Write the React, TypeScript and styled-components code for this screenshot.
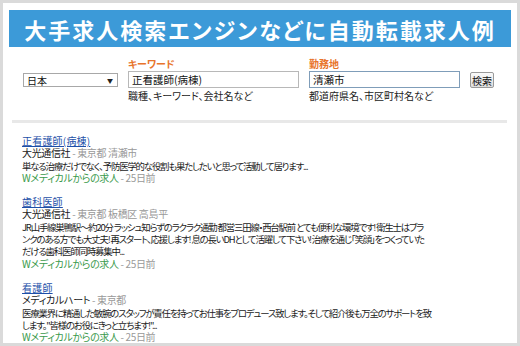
import React from "react";
import styled, { createGlobalStyle } from "styled-components";

const GlobalStyle = createGlobalStyle`
  html, body {
    margin: 0;
    padding: 0;
    background: #ffffff;
  }
  body {
    font-family: "Noto Sans CJK JP", "Noto Sans", sans-serif;
    font-feature-settings: "palt";
  }
`;

const Frame = styled.div`
  width: 520px;
  height: 346px;
  box-sizing: border-box;
  border: 3px solid #dadada;
  background: #ffffff;
  overflow: hidden;
`;

const Banner = styled.h1`
  margin: 7px 6px 0;
  height: 37px;
  background: #3c9ad8;
  color: #ffffff;
  font-size: 22px;
  font-weight: 700;
  letter-spacing: 2px;
  display: flex;
  align-items: center;
  justify-content: center;
`;

const SearchRow = styled.form`
  display: flex;
  align-items: flex-start;
  gap: 10px;
  padding: 11px 0 0 20px;
  height: 73px;
  box-sizing: border-box;
`;

const Field = styled.div<{ $width: number; $offset?: number }>`
  display: flex;
  flex-direction: column;
  width: ${({ $width }) => $width}px;
  padding-top: ${({ $offset }) => $offset ?? 0}px;
`;

const Label = styled.label`
  height: 13px;
  line-height: 12px;
  font-size: 10px;
  font-weight: 700;
  color: #e8742a;
`;

const SelectBox = styled.div`
  height: 14px;
  box-sizing: border-box;
  border: 1px solid #a8a8a8;
  display: flex;
  align-items: center;
  justify-content: space-between;
  padding: 0 4px 0 3px;
  font-size: 10px;
  color: #111;
`;

const Arrow = styled.span`
  font-size: 6px;
  color: #222;
`;

const TextInput = styled.input<{ $focus?: boolean }>`
  height: 17px;
  box-sizing: border-box;
  border: 1px solid ${({ $focus }) => ($focus ? "#7f9db9" : "#b8b8b8")};
  padding: 0 3px;
  margin: 0;
  font-family: inherit;
  font-feature-settings: "palt";
  font-size: 10.5px;
  color: #111;
  outline: none;
`;

const Hint = styled.div`
  margin-top: 2px;
  font-size: 10px;
  line-height: 11px;
  color: #222;
`;

const SearchButton = styled.button`
  margin-top: 14px;
  width: 24px;
  height: 16px;
  padding: 0;
  border: 1px solid #9a9a9a;
  border-radius: 2px;
  background: linear-gradient(#fafafa, #dedede);
  font-family: inherit;
  font-size: 10px;
  color: #111;
`;

const Divider = styled.hr`
  margin: 0 10px 0 9px;
  border: none;
  height: 3px;
  background: #e8e8e8;
`;

const Results = styled.div`
  padding: 12px 0 0 19px;
`;

const Job = styled.div`
  margin-bottom: 12px;
  font-size: 10px;
  line-height: 12.3px;
  color: #1a1a1a;
  white-space: nowrap;
`;

const JobTitle = styled.a`
  display: inline-block;
  color: #1d4fa8;
  text-decoration: underline;
  letter-spacing: 0.2px;
`;

const Line = styled.div<{ $tight?: boolean }>`
  font-size: ${({ $tight }) => ($tight ? "9.4px" : "10px")};
  letter-spacing: ${({ $tight }) => ($tight ? "-1.15px" : "-0.35px")};
`;

const Muted = styled.span`
  color: #999;
`;

const Source = styled.span`
  color: #3a9a4c;
`;

type JobData = {
  title: string;
  company: string;
  place: string;
  lines: string[];
};

const jobs: JobData[] = [
  {
    title: "正看護師(病棟)",
    company: "大光通信社",
    place: "東京都 清瀬市",
    lines: ["単なる治療だけでなく、予防医学的な役割も果たしたいと思って活動して居ります..."],
  },
  {
    title: "歯科医師",
    company: "大光通信社",
    place: "東京都 板橋区 高島平",
    lines: [
      "JR山手線巣鴨駅～約20分 ラッシュ知らずのラクラク通勤 都営三田線・西台駅前 とても便利な環境です! 衛生士はブラ",
      "ンクのある方でも大丈夫! 再スタート、応援します! 息の長いDHとして活躍して下さい! 治療を通じ「笑顔」をつくっていた",
      "だける歯科医師同時募集中...",
    ],
  },
  {
    title: "看護師",
    company: "メディカルハート",
    place: "東京都",
    lines: [
      "医療業界に精通した敏腕のスタッフが責任を持ってお仕事をプロデュース致します。そして紹介後も万全のサポートを致",
      "します。\"皆様のお役にきっと立ちます!\"...",
    ],
  },
];

const App: React.FC = () => {
  return (
    <>
      <GlobalStyle />
      <Frame>
        <Banner>大手求人検索エンジンなどに自動転載求人例</Banner>
        <SearchRow onSubmit={(e) => e.preventDefault()}>
          <Field $width={95} $offset={15}>
            <SelectBox>
              <span>日本</span>
              <Arrow>▼</Arrow>
            </SelectBox>
          </Field>
          <Field $width={171}>
            <Label>キーワード</Label>
            <TextInput defaultValue="正看護師(病棟)" readOnly />
            <Hint>職種、キーワード、会社名など</Hint>
          </Field>
          <Field $width={151}>
            <Label>勤務地</Label>
            <TextInput $focus defaultValue="清瀬市" readOnly />
            <Hint>都道府県名、市区町村名など</Hint>
          </Field>
          <SearchButton type="submit">検索</SearchButton>
        </SearchRow>
        <Divider />
        <Results>
          {jobs.map((job) => (
            <Job key={job.title}>
              <JobTitle href="#">{job.title}</JobTitle>
              <Line>
                {job.company} <Muted>- {job.place}</Muted>
              </Line>
              {job.lines.map((l) => (
                <Line $tight key={l}>
                  {l}
                </Line>
              ))}
              <Line>
                <Source>Wメディカルからの求人</Source> <Muted>- 25日前</Muted>
              </Line>
            </Job>
          ))}
        </Results>
      </Frame>
    </>
  );
};

export default App;
